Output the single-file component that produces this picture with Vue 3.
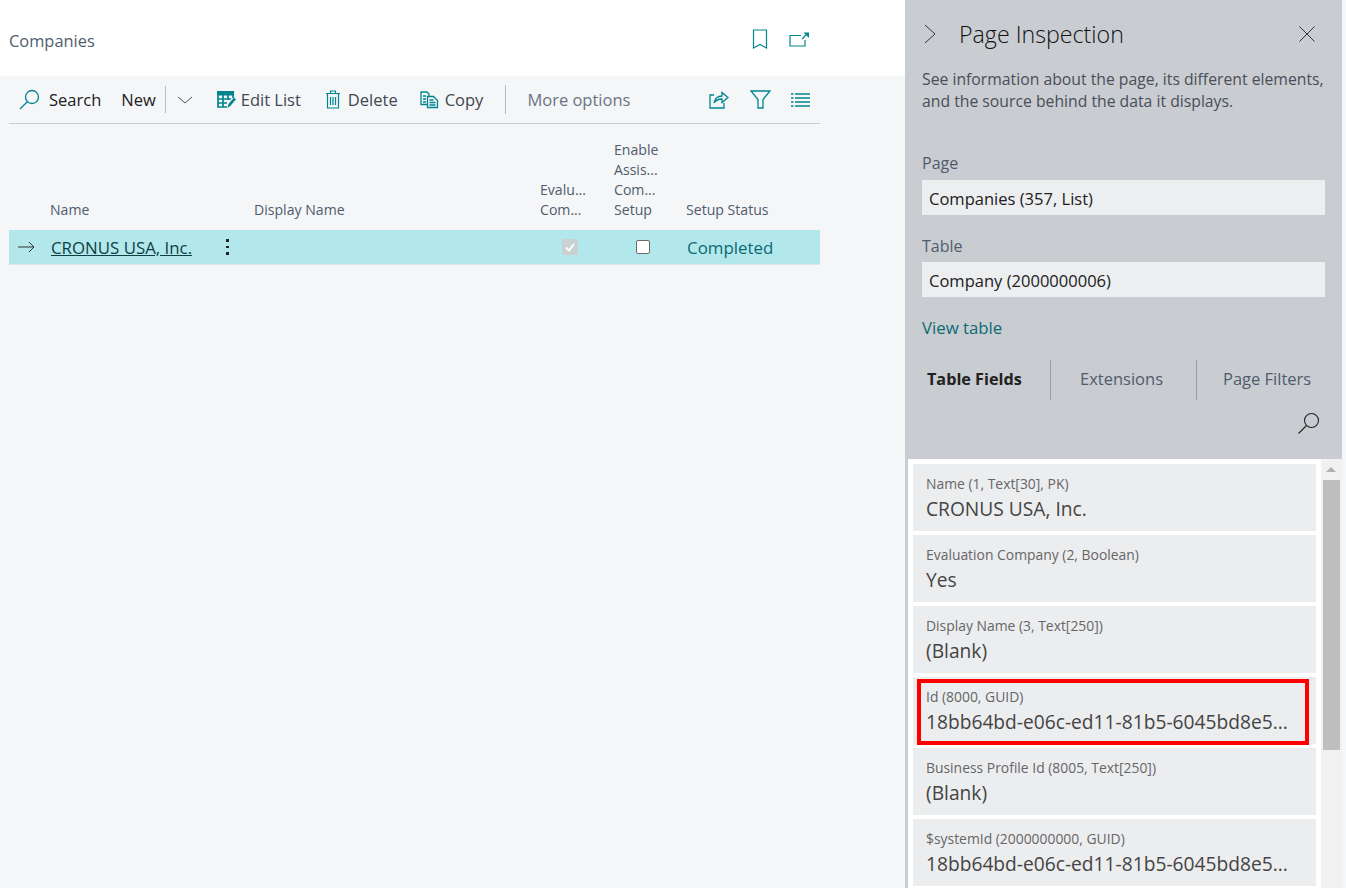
<script setup>
const cards = [
  { label: 'Name (1, Text[30], PK)', value: 'CRONUS USA, Inc.' },
  { label: 'Evaluation Company (2, Boolean)', value: 'Yes' },
  { label: 'Display Name (3, Text[250])', value: '(Blank)' },
  { label: 'Id (8000, GUID)', value: '18bb64bd-e06c-ed11-81b5-6045bd8e5...' },
  { label: 'Business Profile Id (8005, Text[250])', value: '(Blank)' },
  { label: '$systemId (2000000000, GUID)', value: '18bb64bd-e06c-ed11-81b5-6045bd8e5...' }
]
</script>

<template>
  <div class="app">
    <main class="main">
      <header class="head">
        <span class="title">Companies</span>
        <div class="head-icons">
          <svg width="16" height="20" viewBox="0 0 16 20"><path d="M1.500 1h13v18L8 15.500 1.500 19z" fill="none" stroke="#00858f" stroke-width="1.200"/></svg>
          <svg width="20" height="16" viewBox="0 0 20 16"><path d="M12 4.500H1v10.500h15V9" fill="none" stroke="#00858f" stroke-width="1.200"/><path d="M13 8l4-4" stroke="#00858f" stroke-width="1.200"/><path d="M14.500 1.500H20V7z" fill="#00858f"/></svg>
        </div>
      </header>
      <div class="content">
        <div class="toolbar">
          <div class="tb-item search">
            <svg width="21" height="21" viewBox="0 0 21 21"><circle cx="13" cy="8" r="6.500" fill="none" stroke="#00858f" stroke-width="1.300"/><path d="M8.500 12.500 1 20" stroke="#00858f" stroke-width="1.300"/></svg>
            <span class="dark">Search</span>
          </div>
          <span class="tb-item new dark">New</span>
          <span class="vsep small"></span>
          <svg class="chev" width="16" height="8" viewBox="0 0 16 8"><path d="M1 1l7 6 7-6" fill="none" stroke="#555" stroke-width="1"/></svg>
          <div class="tb-item edit">
            <svg width="19" height="17" viewBox="0 0 19 17"><path d="M0 0h17v4.500H0z" fill="#00858f"/><path d="M1 4v12h9M6 4v12M11 4v5M1 8h13M1 12h9M16 4v3" fill="none" stroke="#00858f" stroke-width="1.700"/><path d="M10.500 17l1-4 5.500-6.500 2 1.800-5.500 6.500z" fill="#00858f"/></svg>
            <span>Edit List</span>
          </div>
          <div class="tb-item del">
            <svg width="16" height="19" viewBox="0 0 16 19"><path d="M1 3.500h14M5.500 3V1h5v2M2.500 4v14h11V4M5.500 7v8M8 7v8M10.500 7v8" fill="none" stroke="#00858f" stroke-width="1.200"/></svg>
            <span>Delete</span>
          </div>
          <div class="tb-item copy">
            <svg width="19" height="18" viewBox="0 0 19 18"><path d="M7 13.500H1V1h6l2 2v2M3 5h3M3 8h3M3 11h3" fill="none" stroke="#00858f" stroke-width="1.300"/><path d="M7.500 5.500h6l4 4v7h-10zM9.500 9h4M9.500 11.500h6M9.500 14h6" fill="none" stroke="#00858f" stroke-width="1.300"/></svg>
            <span>Copy</span>
          </div>
          <span class="vsep big"></span>
          <span class="more">More options</span>
          <div class="tb-right">
            <svg width="20" height="18" viewBox="0 0 20 18"><path d="M5 4H1v13h14v-5" fill="none" stroke="#00858f" stroke-width="1.300"/><path d="M5 12c1-5 4-7 8-7V1.500L19 6.500l-6 5V8c-4 0-6 1-8 4z" fill="none" stroke="#00858f" stroke-width="1.300"/></svg>
            <svg width="21" height="19" viewBox="0 0 21 19"><path d="M1 1h19l-7 8.500V18H8V9.500z" fill="none" stroke="#00858f" stroke-width="1.300"/></svg>
            <svg width="19" height="14" viewBox="0 0 19 14"><path d="M0 1h2.500M4 1h15M0 5h2.500M4 5h15M0 9h2.500M4 9h15M0 13h2.500M4 13h15" stroke="#00858f" stroke-width="1.300"/></svg>
          </div>
        </div>
        <div class="table">
          <div class="th name">Name</div>
          <div class="th dname">Display Name</div>
          <div class="th ev">Evalu...<br>Com...</div>
          <div class="th en">Enable<br>Assis...<br>Com...<br>Setup</div>
          <div class="th st">Setup Status</div>
          <div class="row">
            <svg class="arrow" width="17" height="12" viewBox="0 0 17 12"><path d="M0 6h16M11 1l5 5-5 5" fill="none" stroke="#333" stroke-width="1"/></svg>
            <a class="link">CRONUS USA, Inc.</a>
            <span class="dots"><i></i><i></i><i></i></span>
            <span class="chk disabled"><svg width="12" height="12" viewBox="0 0 12 12"><path d="M2 6.500 5 9.500 10 3" fill="none" stroke="#fff" stroke-width="2"/></svg></span>
            <span class="chk open"></span>
            <span class="status">Completed</span>
          </div>
        </div>
      </div>
    </main>
    <aside class="panel">
      <div class="p-head">
        <svg width="13" height="20" viewBox="0 0 13 20"><path d="M1 1l10 9-10 9" fill="none" stroke="#333" stroke-width="1"/></svg>
        <h1>Page Inspection</h1>
        <svg width="16" height="16" viewBox="0 0 16 16"><path d="M.5.500l15 15M15.500.500l-15 15" stroke="#333" stroke-width="1"/></svg>
      </div>
      <p class="desc">See information about the page, its different elements, and the source behind the data it displays.</p>
      <div class="lab first">Page</div>
      <div class="val">Companies (357, List)</div>
      <div class="lab second">Table</div>
      <div class="val">Company (2000000006)</div>
      <div class="view">View table</div>
      <div class="tabs">
        <span class="tab t1">Table Fields</span>
        <span class="tab t2">Extensions</span>
        <span class="tab t3">Page Filters</span>
      </div>
      <div class="p-search">
        <svg width="23" height="23" viewBox="0 0 23 23"><circle cx="14.500" cy="8.500" r="7" fill="none" stroke="#222" stroke-width="1.100"/><path d="M9.500 13.500 1.500 21.500" stroke="#222" stroke-width="1.100"/></svg>
      </div>
      <div class="list">
        <div class="cards">
          <div v-for="c in cards" :key="c.label" class="card">
            <div class="c-label">{{ c.label }}</div>
            <div class="c-value">{{ c.value }}</div>
          </div>
        </div>
        <div class="scroll">
          <span class="up"></span>
          <span class="thumb"></span>
        </div>
        <div class="mark"></div>
      </div>
    </aside>
  </div>
</template>

<style>
body { margin: 0; background: #fff; }
</style>

<style scoped>
.app {
  display: flex;
  width: 1346px;
  height: 888px;
  overflow: hidden;
  background: #f5f6f8;
  font-family: "Open Sans", "Noto Sans", sans-serif;
  color: #505c6d;
}
.main { width: 905px; flex: none; display: flex; flex-direction: column; }
.head {
  height: 76px;
  background: #fff;
  box-sizing: border-box;
  display: flex;
  align-items: center;
  padding: 6px 0 0 9px;
}
.title { font-size: 16.400px; width: 743px; color: #505c6d; margin-top: -1px; }
.head-icons { display: flex; align-items: center; gap: 21px; margin-top: -4px; }
.content { flex: 1; }
.toolbar {
  width: 811px;
  margin-left: 9px;
  height: 48px;
  box-sizing: border-box;
  border-bottom: 1px solid #c9ccd1;
  display: flex;
  align-items: center;
  font-size: 16.500px;
  color: #3e4753;
}
.dark { color: #212121; }
.tb-item { display: flex; align-items: center; gap: 9px; }
.search { margin-left: 10px; }
.new { margin-left: 20px; }
.vsep { background: #b9bcc2; width: 1px; display: block; }
.vsep.small { height: 27px; margin-left: 9px; }
.chev { margin-left: 11px; }
.edit { margin-left: 24px; gap: 5px; }
.del { margin-left: 24px; gap: 7px; }
.copy { margin-left: 22px; gap: 6px; }
.vsep.big { height: 29px; margin-left: 22px; }
.more { margin-left: 21px; color: #6b7482; }
.tb-right { margin-left: auto; display: flex; align-items: center; gap: 21px; padding-right: 10px; }
.tb-right svg:nth-child(2) { margin-right: -1px; }
.table {
  width: 811px;
  margin-left: 9px;
  display: grid;
  grid-template-columns: 41px 204px 287px 73px 73px 133px;
  grid-template-rows: 106px 35px;
}
.th {
  align-self: end;
  font-size: 14.100px;
  line-height: 20px;
  padding-bottom: 10px;
  color: #505c6d;
}
.name { grid-column: 2; }
.dname { grid-column: 3; }
.ev { grid-column: 4; margin-left: -1px; }
.en { grid-column: 5; }
.st { grid-column: 6; margin-left: -1px; }
.row {
  grid-column: 1 / -1;
  display: grid;
  grid-template-columns: subgrid;
  align-items: center;
  background: #b2e8eb;
  border-bottom: 1px solid #dfe3e6;
  position: relative;
}
.arrow { grid-column: 1; margin-left: 9px; }
.link { grid-column: 2; color: #0d3f45; text-decoration: underline; font-size: 16.850px; margin-left: 1px; }
.dots { position: absolute; left: 217px; top: 9px; display: flex; flex-direction: column; gap: 4px; }
.dots i { width: 2.500px; height: 2.500px; background: #222; display: block; }
.chk { width: 14px; height: 14px; box-sizing: border-box; border-radius: 2px; display: flex; align-items: center; justify-content: center; }
.chk.disabled { grid-column: 4; background: #c9d1d2; margin-left: 21px; width: 16px; height: 16px; }
.chk.open { grid-column: 5; background: #fff; border: 1px solid #6b6b6b; margin-left: 22px; }
.status { grid-column: 6; color: #0b6a72; font-size: 16.900px; }
.panel {
  width: 437px;
  flex: none;
  background: #c9ccd1;
  display: flex;
  flex-direction: column;
  box-sizing: border-box;
  padding-top: 16px;
  position: relative;
}
.p-head { display: flex; align-items: center; padding: 0 27px 0 19px; height: 36px; }
.p-head h1 { margin: 0 0 0 22px; font-weight: 300; font-size: 23.200px; color: #111; flex: 1; }
.desc {
  margin: 16px 10px 0 17px;
  font-size: 15.750px;
  line-height: 22px;
  color: #4a4f58;
}
.lab { margin-left: 17px; font-size: 16px; color: #505c6d; line-height: 22px; }
.first { margin-top: 40px; }
.second { margin-top: 20px; margin-bottom: -1px; }
.val {
  margin: 6px 17px 0;
  height: 35px;
  background: #eceef0;
  padding-left: 7px;
  font-size: 16.550px;
  line-height: 38px;
  color: #212121;
}
.view { margin: 20px 0 0 17px; font-size: 16.800px; color: #0a6b74; line-height: 22px; }
.tabs { display: flex; margin-top: 21px; height: 40px; align-items: center; font-size: 16.500px; color: #505c6d; }
.tab { box-sizing: border-box; height: 40px; line-height: 38px; }
.t1 { width: 146px; padding-left: 22px; border-right: 1px solid #9a9da3; font-weight: 700; color: #212121; font-size: 16.200px; }
.t2 { width: 146px; padding-left: 29px; border-right: 1px solid #9a9da3; }
.t3 { padding-left: 26px; }
.p-search { height: 59px; padding: 12px 0 0 392px; box-sizing: border-box; }
.list {
  flex: 1;
  background: #fff;
  margin-left: 3px;
  position: relative;
  display: flex;
  min-height: 0;
}
.cards { width: 413px; padding: 5px 0 0 5px; box-sizing: border-box; display: flex; flex-direction: column; gap: 4px; }
.card {
  width: 403px;
  height: 67px;
  flex: none;
  background: #ecedef;
  padding: 10px 0 0 13px;
  box-sizing: border-box;
}
.c-label { font-size: 13.900px; line-height: 20px; color: #666; }
.c-value { font-size: 19.200px; line-height: 26px; margin-top: 2px; color: #444; }
.scroll { width: 21px; background: #f1f1f1; position: relative; }
.up { position: absolute; left: 5px; top: 8px; border: 5px solid transparent; border-top: 0; border-bottom: 5px solid #b0b0b0; }
.thumb { position: absolute; left: 2px; top: 21px; width: 17px; height: 270px; background: #bebebe; }
.mark { position: absolute; left: 9px; top: 220px; width: 392px; height: 66px; box-sizing: border-box; border: 4px solid #f00; }
</style>
